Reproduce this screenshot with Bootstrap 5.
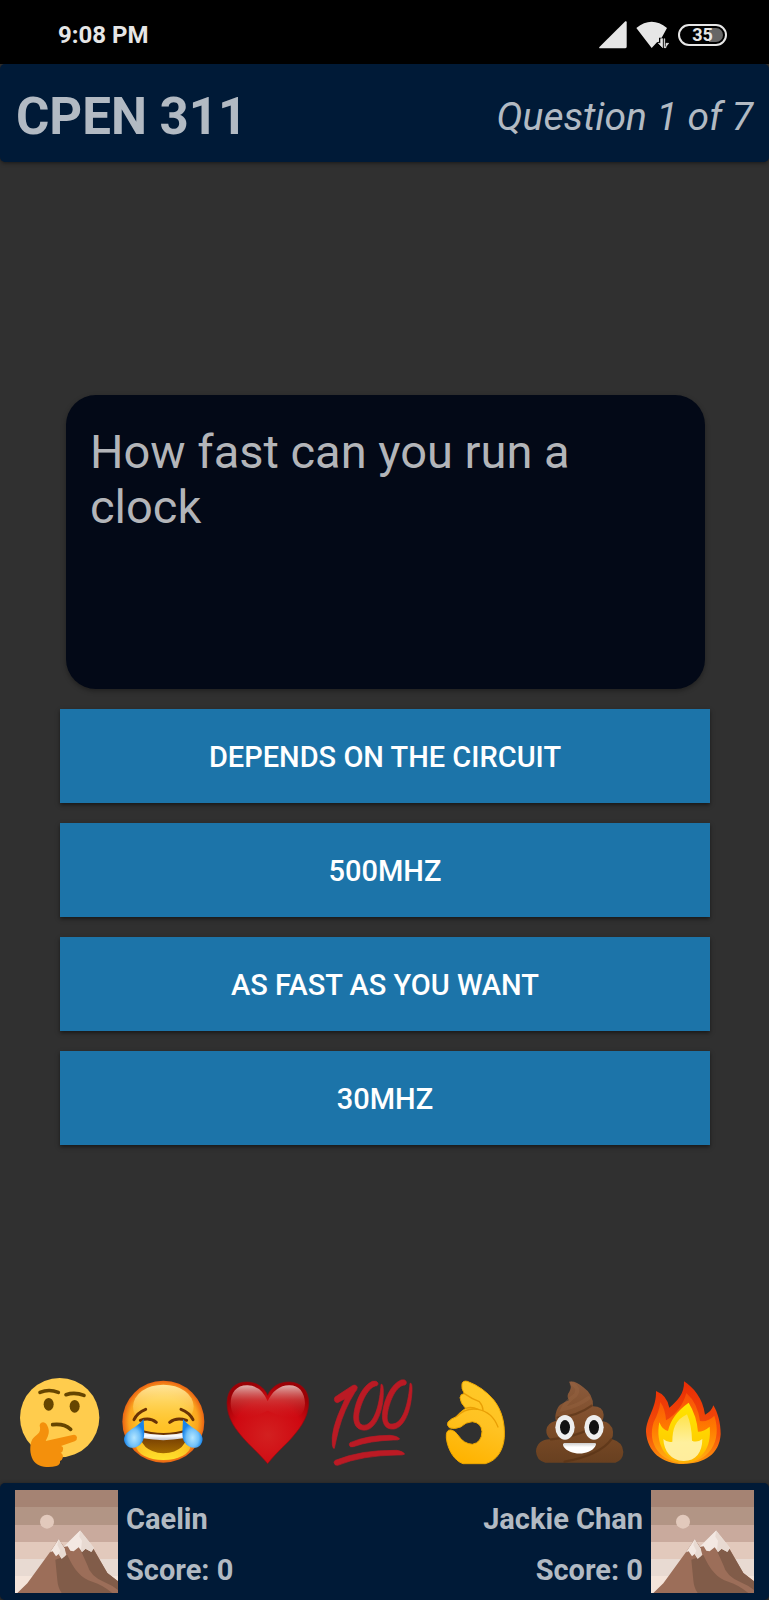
<!DOCTYPE html>
<html lang="en">
<head>
<meta charset="utf-8">
<meta name="viewport" content="width=device-width, initial-scale=1">
<title>CPEN 311 Quiz</title>
<link href="https://cdn.jsdelivr.net/npm/bootstrap@5.3.0/dist/css/bootstrap.min.css" rel="stylesheet">
<style>
  body { background: #303030; font-family: Roboto, "Liberation Sans", sans-serif; }
  .status-bar { height: 64px; background: #000; color: #e6e6e6; padding: 6px 42px 0 58px; font-size: 24px; font-weight: 700; }
  .status-icons { gap: 9px; }
  .battery { width: 49px; height: 22px; border: 2px solid #e6e6e6; border-radius: 11px; padding: 2px; font-size: 18px; line-height: 14px; }
  .battery-level { border-radius: 8px; background: linear-gradient(90deg, #000 65%, #666 65%); }
  .quiz-bar { background: #001a37; color: #b2bac3; border-radius: 5px; box-shadow: 0 1px 4px rgba(0, 0, 0, .5); }
  .quiz-header { min-height: 98px; padding: 7px 16px 0; }
  .quiz-title { font-size: 51px; font-weight: 700; line-height: 60px; }
  .quiz-progress { font-size: 39px; line-height: 48px; font-style: italic; }
  .quiz-main { padding: 6px 59px 0 60px; }
  .question-card { min-height: 294px; margin: 0 5px 20px 6px; padding: 29px 24px; border-radius: 30px; background: #030917; color: #b3b5b9; box-shadow: 0 2px 5px rgba(0, 0, 0, .35); font-size: 47px; line-height: 55px; }
  .answers { gap: 20px; }
  .answer { --bs-btn-color: #fff; --bs-btn-bg: #1c74a9; --bs-btn-hover-color: #fff; --bs-btn-hover-bg: #18658f; --bs-btn-active-color: #fff; --bs-btn-active-bg: #145980; min-height: 94px; border: 0; border-radius: 0; padding: 8px 12px 6px; font-size: 29px; line-height: 36px; font-weight: 500; box-shadow: 0 2px 4px rgba(0, 0, 0, .5); }
  .reactions { padding: 0 33px 7px 8px; }
  .reaction { flex: 1 1 0; min-width: 0; border: 0; padding: 0; background: none; }
  .reaction svg { width: 100%; }
  .player-bar { min-height: 117px; padding: 7px 15px 0; font-size: 29px; line-height: 51px; font-weight: 700; }
  .avatar { width: 103px; height: 103px; }
</style>
</head>
<body>
<div class="d-flex flex-column min-vh-100">
  <div class="status-bar d-flex justify-content-between align-items-center">
    <span>9:08 PM</span>
    <div class="status-icons d-flex align-items-center">
      <svg width="28" height="28" viewBox="54 28 84 84" role="img" aria-label="Signal"><path d="M133 29q4-2 4 3v73q0 5-5 5H58q-6 0-2-5z" fill="#e6e6e6"/></svg>
      <svg width="33" height="28" viewBox="172 28 99 84" role="img" aria-label="Wi-Fi"><path d="M173 49Q219 12 265 49L249 78H241V90L235 92L219 109Z" fill="#e6e6e6"/><path d="M239 95h7V81h6v27zM257 81v27h5V95h8L258 109V81z" fill="#e6e6e6" stroke="#e6e6e6" stroke-width="2"/></svg>
      <div class="battery"><div class="battery-level text-center">35</div></div>
    </div>
  </div>

  <header class="quiz-bar quiz-header d-flex justify-content-between align-items-center">
    <h1 class="quiz-title m-0">CPEN 311</h1>
    <span class="quiz-progress">Question 1 of 7</span>
  </header>

  <main class="quiz-main flex-grow-1 d-flex flex-column justify-content-center">
    <h2 class="question-card fw-normal">How fast can you run a clock</h2>
    <div class="answers d-grid">
      <button type="button" class="btn answer text-uppercase">Depends on the circuit</button>
      <button type="button" class="btn answer text-uppercase">500MHz</button>
      <button type="button" class="btn answer text-uppercase">As fast as you want</button>
      <button type="button" class="btn answer text-uppercase">30MHz</button>
    </div>
  </main>

  <div class="reactions d-flex">
    <button type="button" class="reaction" aria-label="Thinking">
      <svg class="d-block" viewBox="-6 6 312 312">
        <circle cx="149" cy="143" r="119" fill="#ffcc4d"/>
        <g fill="none" stroke="#664500" stroke-linecap="round" stroke-width="11"><path d="M90 67Q117 56 145 67"/><path d="M168 74Q194 65 222 76"/><path d="M128 164Q162 160 182 178"/></g>
        <ellipse cx="116" cy="103" rx="15" ry="19" fill="#664500"/><ellipse cx="194" cy="109" rx="15" ry="19" fill="#664500"/>
        <path d="M89 166C91 154 105 153 111 165C117 176 119 187 113 200Q109 208 107 213L188 195Q199 192 201 202Q202 210 194 214L153 228Q161 230 159 239Q158 247 152 248Q161 253 158 264Q156 272 150 273Q152 284 139 288C116 295 82 292 69 270C59 253 58 224 67 208C79 191 95 193 89 166Z" fill="#f4900c"/>
      </svg>
    </button>
    <button type="button" class="reaction" aria-label="Tears of joy">
      <svg class="d-block" viewBox="306 6 312 312">
        <defs>
          <radialGradient id="joyFace"><stop offset=".6" stop-color="#ffc227"/><stop offset=".84" stop-color="#fba41f"/><stop offset="1" stop-color="#ea6312"/></radialGradient>
          <linearGradient id="joyShine" x2="0" y2="1"><stop stop-color="#ffe79c"/><stop offset="1" stop-color="#ffd34b" stop-opacity="0"/></linearGradient>
          <linearGradient id="joyChin" x2="0" y2="1"><stop stop-color="#ffdc28" stop-opacity="0"/><stop offset="1" stop-color="#ffe52b"/></linearGradient>
          <linearGradient id="joyMouth" x2="0" y2="1"><stop stop-color="#5f2804"/><stop offset="1" stop-color="#a36a00"/></linearGradient>
          <linearGradient id="joyTeeth" x2="0" y2="1"><stop stop-color="#d9d9e0"/><stop offset=".5" stop-color="#fff"/><stop offset="1" stop-color="#bcbcc9"/></linearGradient>
          <radialGradient id="joyTear" cx=".5" cy=".65"><stop stop-color="#b4e6ff"/><stop offset=".6" stop-color="#71c1fa"/><stop offset="1" stop-color="#1784ea"/></radialGradient>
        </defs>
        <circle cx="460" cy="155" r="123" fill="url(#joyFace)"/>
        <ellipse cx="460" cy="110" rx="91" ry="66" fill="url(#joyShine)"/>
        <ellipse cx="460" cy="226" rx="82" ry="44" fill="url(#joyChin)"/>
        <path d="M387 177Q460 201 534 177Q534 247 460 250Q388 246 387 177Z" fill="url(#joyMouth)"/>
        <path d="M390 185Q460 205 531 185L520 205Q460 216 399 205Z" fill="url(#joyTeeth)"/>
        <g fill="none" stroke="#6a3205" stroke-linecap="round" stroke-width="9"><path d="M372 149Q382 128 407 118"/><path d="M549 149Q539 128 513 118"/><path d="M391 151Q420 141 439 157"/><path d="M479 157Q498 141 530 151"/></g>
        <path d="M401 147C402 180 406 203 396 217C384 236 361 239 348 224C334 204 347 190 365 177Q389 163 401 147Z" fill="url(#joyTear)"/>
        <path d="M519 147C518 180 514 203 524 217C536 236 559 239 572 224C586 204 573 190 555 177Q531 163 519 147Z" fill="url(#joyTear)"/>
      </svg>
    </button>
    <button type="button" class="reaction" aria-label="Heart">
      <svg class="d-block" viewBox="18 6 312 312">
        <defs>
          <radialGradient id="heartFill" cx=".5" cy=".65" r=".65"><stop stop-color="#d32020"/><stop offset=".65" stop-color="#cf0911"/><stop offset="1" stop-color="#9b0005"/></radialGradient>
          <linearGradient id="heartShine" x2="0" y2="1"><stop stop-color="#dfb0ad"/><stop offset=".45" stop-color="#d04442" stop-opacity=".7"/><stop offset="1" stop-color="#d01a1e" stop-opacity="0"/></linearGradient>
        </defs>
        <path d="M173 281Q154 259 113 219C75 178 51 145 51 98C52 58 76 36 110 36C139 36 163 52 173 76C184 50 208 35 239 36C274 38 297 61 296 101C294 147 267 180 235 215Q193 255 173 281Z" fill="url(#heartFill)" stroke="#8d0b10" stroke-width="2"/>
        <path d="M173 94Q154 47 113 46C80 45 62 67 62 101Q64 144 96 145Q127 144 173 122Q223 145 253 143Q284 138 285 100C284 66 266 45 237 46Q195 47 173 94Z" fill="url(#heartShine)"/>
      </svg>
    </button>
    <button type="button" class="reaction" aria-label="Hundred points">
      <svg class="d-block" viewBox="330 6 312 312">
        <g fill="#bb1a24" stroke="#bb1a24" stroke-width="2">
          <path d="M373 89Q371 82 383 76L427 47Q438 42 442 52Q442 59 435 66Q402 119 386 179Q379 207 373 235Q369 237 367 225Q361 181 399 101L405 86L383 98Q374 98 373 89Z"/>
          <path d="M487 34Q500 31 504 39Q505 44 501 47C475 49 454 95 447 130C443 158 451 170 470 164C496 153 510 97 513 43Q520 39 520 67C520 123 499 174 469 180C441 184 427 162 432 129C438 88 459 47 487 34Z"/>
          <path d="M573 30Q586 27 589 35Q590 42 585 45C559 46 540 90 533 126C528 155 535 168 556 160C582 150 596 94 600 40Q607 36 606 63C603 122 584 171 552 177C525 180 514 158 518 125C524 84 544 43 573 30Z"/>
          <path d="M420 218Q470 196 540 196Q563 198 569 207Q567 211 550 210Q480 212 430 230Q419 233 418 225Q417 220 420 218Z"/>
          <path d="M376 271Q455 239 560 241Q580 244 584 252Q580 256 564 255Q455 256 383 286Q374 287 372 278Q372 273 376 271Z"/>
        </g>
      </svg>
    </button>
    <button type="button" class="reaction" aria-label="OK hand">
      <svg class="d-block" viewBox="12 6 312 312">
        <defs><linearGradient id="okSkin" x1=".7" y1="0" x2=".4" y2="1"><stop stop-color="#ffca28"/><stop offset=".5" stop-color="#ffc222"/><stop offset="1" stop-color="#ffb300"/></linearGradient></defs>
        <path d="M126 42Q128 31 142 34Q190 52 222 91C246 122 255 159 253 202C250 239 232 272 196 281H129C104 273 83 240 79 204Q77 178 93 180Q105 181 116 198Q131 221 157 223Q185 218 186 185Q184 158 157 155Q137 156 122 171Q102 179 88 173Q79 165 84 156Q92 146 109 140Q122 124 137 115Q121 99 120 83Q121 71 133 71Q123 55 126 42Z" fill="url(#okSkin)" stroke="#eda600" stroke-width="3"/>
        <g fill="none" stroke="#e99f05" stroke-width="4" stroke-linecap="round"><path d="M133 71Q156 87 178 95Q189 108 189 121"/><path d="M109 140Q138 112 174 118Q217 126 234 171"/><path d="M137 115Q155 109 174 118"/></g>
      </svg>
    </button>
    <button type="button" class="reaction" aria-label="Poop">
      <svg class="d-block" viewBox="324 6 312 312">
        <defs>
          <linearGradient id="poopBrown" x2="0" y2="1"><stop stop-color="#8b5b3d"/><stop offset=".55" stop-color="#7d4c28"/><stop offset="1" stop-color="#684020"/></linearGradient>
          <linearGradient id="poopSmile" x2="0" y2="1"><stop stop-color="#ccc"/><stop offset=".4" stop-color="#fff"/></linearGradient>
        </defs>
        <path d="M348 244C349 220 369 207 391 208Q378 196 379 180Q381 159 408 152Q403 143 410 121Q415 102 447 91Q438 78 448 65Q457 49 447 35Q467 31 489 51Q521 73 519 109Q549 109 551 134Q551 144 547 153Q576 158 579 185Q580 198 575 207Q609 216 610 246Q609 271 586 278H376Q349 272 348 244Z" fill="url(#poopBrown)"/>
        <g fill="none" stroke="#553014" stroke-opacity=".6" stroke-width="7" stroke-linecap="round"><path d="M413 143Q471 139 515 107"/><path d="M393 208Q489 199 545 154"/><path d="M434 275Q540 255 574 208"/></g>
        <path d="M455 41Q481 54 467 75Q437 96 428 118Q477 107 505 84" fill="none" stroke="#9b6746" stroke-opacity=".35" stroke-width="12" stroke-linecap="round"/>
        <ellipse cx="435" cy="172" rx="29" ry="37" fill="#eee"/><ellipse cx="522" cy="172" rx="29" ry="37" fill="#eee"/>
        <ellipse cx="435" cy="172" rx="15" ry="22" fill="#111"/><ellipse cx="522" cy="172" rx="15" ry="22" fill="#111"/>
        <path d="M433 219H524Q532 219 525 230C508 257 449 257 431 230Q426 221 433 219Z" fill="url(#poopSmile)"/>
      </svg>
    </button>
    <button type="button" class="reaction" aria-label="Fire">
      <svg class="d-block" viewBox="36 6 312 312">
        <defs>
          <linearGradient id="fireRed" x2="0" y2="1"><stop stop-color="#e92c04"/><stop offset=".65" stop-color="#f4510b"/><stop offset="1" stop-color="#ff9b0b"/></linearGradient>
          <linearGradient id="fireOrange" x2="0" y2="1"><stop stop-color="#f84d08"/><stop offset=".5" stop-color="#ff7b00"/><stop offset="1" stop-color="#ffaf13"/></linearGradient>
          <linearGradient id="fireYellow" x2="0" y2="1"><stop stop-color="#ffe500"/><stop offset=".7" stop-color="#ffcd00"/><stop offset="1" stop-color="#ffb000"/></linearGradient>
          <linearGradient id="fireCore" x2="0" y2="1"><stop stop-color="#ffe34b"/><stop offset=".6" stop-color="#fff09d"/><stop offset="1" stop-color="#ffed9d"/></linearGradient>
        </defs>
        <path d="M192 34C220 53 248 83 255 134Q275 124 280 106C293 127 302 158 302 193C298 252 255 281 190 282C125 281 82 246 78 185C79 142 110 114 108 63Q141 76 148 113C171 94 194 72 192 34Z" fill="url(#fireRed)"/>
        <path d="M199 69Q233 99 240 153Q265 156 283 137C308 213 267 277 191 279C121 278 80 220 101 157Q118 124 121 96Q136 117 138 151C169 133 190 104 199 69Z" fill="url(#fireOrange)"/>
        <path d="M206 98Q230 137 234 185Q252 185 269 170C276 235 242 277 191 278C137 275 105 222 118 157Q127 180 144 183Q154 135 206 98Z" fill="url(#fireYellow)"/>
        <path d="M201 133Q215 164 216 212Q231 219 247 207C247 248 227 274 190 273C153 272 132 243 130 207Q143 219 157 215C158 178 164 151 201 133Z" fill="url(#fireCore)"/>
      </svg>
    </button>
  </div>

  <svg width="0" height="0" class="position-absolute" aria-hidden="true">
    <symbol id="mountain" viewBox="45 59 309 309">
      <g shape-rendering="crispEdges"><path d="M45 59H354V368H45z" fill="#a58373"/><path d="M45 111H354V368H45z" fill="#b29585"/><path d="M45 163H354V368H45z" fill="#c9aa9d"/><path d="M45 214H354V368H45z" fill="#e2c9bc"/><path d="M45 267H354V368H45z" fill="#e8dad2"/><path d="M45 316H354V368H45z" fill="#f4e4da"/></g>
      <circle cx="141" cy="154" r="21" fill="#e2c9bc"/>
      <path d="M52 368L82 339L148 248L176 207L192 229L240 180L277 229L322 308L354 333V368Z" fill="#9c6e59"/>
      <path d="M185 368Q174 354 172 330L166 268L183 262L202 254C221 296 244 326 277 334Q309 344 337 368Z" fill="#815c49"/>
      <path d="M240 235L276 229L322 308L354 333V359Q336 345 314 336Q270 317 262 284Z" fill="#815c49"/>
      <path d="M176 207L150 246L158 243L168 258L176 251L185 265L196 256L194 235Z" fill="#f3e8e2"/>
      <path d="M176 207L172 224L181 241L176 251L185 265L199 253L194 235Z" fill="#e8dad2"/>
      <path d="M240 180L190 230L203 228L211 241L221 243L236 231L246 245L256 235L274 244L282 233Z" fill="#f3e8e2"/>
      <path d="M240 180L238 199L246 211L243 239L246 245L257 235L274 245L282 233Z" fill="#e8dad2"/>
    </symbol>
  </svg>

  <footer class="quiz-bar player-bar d-flex justify-content-between align-items-start">
    <div class="d-flex gap-2">
      <svg class="avatar flex-shrink-0" role="img" aria-label="Caelin's picture"><use href="#mountain"/></svg>
      <div class="pt-1"><div>Caelin</div><div>Score: 0</div></div>
    </div>
    <div class="d-flex gap-2 text-end">
      <div class="pt-1"><div>Jackie Chan</div><div>Score: 0</div></div>
      <svg class="avatar flex-shrink-0" role="img" aria-label="Jackie Chan's picture"><use href="#mountain"/></svg>
    </div>
  </footer>
</div>
<script src="https://cdn.jsdelivr.net/npm/bootstrap@5.3.0/dist/js/bootstrap.bundle.min.js"></script>
</body>
</html>
